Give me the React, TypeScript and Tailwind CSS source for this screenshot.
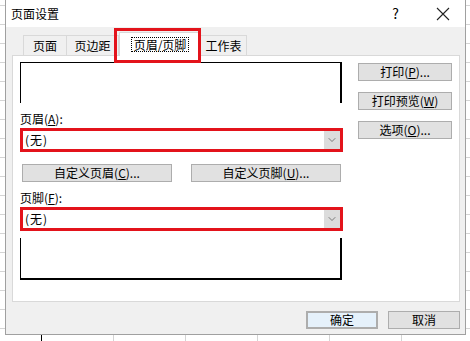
import { ChevronDown } from "lucide-react";

const font = { fontFamily: '"Noto Sans CJK SC", "Noto Sans", sans-serif' };

const Btn = ({ label, className = "" }: { label: React.ReactNode; className?: string }) => (
  <div
    className={`flex items-center justify-center bg-[#e1e1e1] border border-[#adadad] text-[12px] leading-none text-black ${className}`}
  >
    {label}
  </div>
);

const Combo = () => (
  <div className="flex h-[24px] w-[323px] items-stretch border-[3px] border-[#e3131b] bg-white">
    <div className="flex flex-1 items-center pl-[2px] text-[12px] tracking-[1px] text-black">(无)</div>
    <div className="flex w-[16px] items-center justify-center bg-[#dcdcdc]">
      <ChevronDown size={12} strokeWidth={1.3} color="#444" />
    </div>
  </div>
);

const App = () => {
  return (
    <div
      style={font}
      className="relative h-[341px] w-[470px] overflow-hidden bg-white bg-[linear-gradient(to_bottom,#d4d4d4_1px,transparent_1px)] bg-[length:100%_19px] bg-[position:0_5px]"
    >
      {/* spreadsheet column lines below the dialog */}
      <div className="absolute left-0 top-[335px] flex h-[6px] w-full">
        <div className="w-[41px]" />
        <div className="w-[72px] border-l border-dashed border-black" />
        <div className="w-[72px] border-l border-[#d4d4d4]" />
        <div className="w-[72px] border-l border-[#d4d4d4]" />
        <div className="w-[72px] border-l border-[#d4d4d4]" />
        <div className="w-[72px] border-l border-[#d4d4d4]" />
        <div className="w-[69px] border-l border-[#d4d4d4]" />
      </div>

      <div className="absolute left-[5px] top-0 flex h-[335px] w-[461px] flex-col border border-t-0 border-[#a0a0a0] bg-[#f0f0f0]">
        {/* title bar */}
        <div className="flex h-[27px] items-center bg-white pl-[5px] text-[12px] text-black">
          <span className="flex-1">页面设置</span>
          <span className="mr-[37px] text-[14px]">?</span>
          <svg width="14" height="14" viewBox="0 0 14 14" className="mr-[15px]">
            <path d="M1 1L13 13M13 1L1 13" stroke="#222" strokeWidth="1.1" />
          </svg>
        </div>

        {/* tabs */}
        <div className="relative ml-[7px] mt-[4px] flex h-[24px] items-end text-[12px] text-black">
          <div className="ml-[10px] flex h-[20px] w-[44px] items-center justify-center border border-b-0 border-[#d9d9d9]">
            页面
          </div>
          <div className="flex h-[20px] w-[52px] items-center justify-center border border-b-0 border-l-0 border-[#d9d9d9]">
            页边距
          </div>
          <div className="z-10 -mb-px flex h-[24px] w-[82px] items-center justify-center border border-b-0 border-[#d9d9d9] bg-white">
            <span className="border border-dotted border-black px-[2px] leading-[13px]">页眉/页脚</span>
          </div>
          <div className="flex h-[20px] w-[46px] items-center justify-center border border-b-0 border-l-0 border-[#d9d9d9]">
            工作表
          </div>
          <div className="absolute left-[101px] top-[-3px] z-20 h-[35px] w-[87px] border-[3px] border-[#e3131b]" />
        </div>

        {/* tab panel */}
        <div className="ml-[6px] flex h-[247px] w-[448px] border border-[#d9d9d9] bg-white pt-[6px]">
          <div className="ml-[7px] flex w-[323px] flex-col">
            <div className="h-[41px] w-[322px] border-l border-t border-r-2 border-black" />
            <div className="mt-[9px] text-[12px] leading-[14px] text-black">页眉(<u>A</u>):</div>
            <div className="mt-[2px]">
              <Combo />
            </div>
            <div className="mt-[12px] flex gap-[19px] pl-[2px]">
              <Btn className="h-[18px] w-[150px]" label={<span>自定义页眉(<u>C</u>)...</span>} />
              <Btn className="h-[18px] w-[150px]" label={<span>自定义页脚(<u>U</u>)...</span>} />
            </div>
            <div className="mt-[9px] text-[12px] leading-[14px] text-black">页脚(<u>F</u>):</div>
            <div className="mt-[2px]">
              <Combo />
            </div>
            <div className="mt-[7px] h-[42px] w-[322px] border-b-2 border-l border-r-2 border-black" />
          </div>
          <div className="ml-[15px] flex w-[94px] flex-col gap-[11px] pt-[1px]">
            <Btn className="h-[18px]" label={<span>打印(<u>P</u>)...</span>} />
            <Btn className="h-[18px]" label={<span>打印预览(<u>W</u>)</span>} />
            <Btn className="h-[18px]" label={<span>选项(<u>O</u>)...</span>} />
          </div>
        </div>

        {/* footer buttons */}
        <div className="mt-[9px] flex justify-end gap-[10px] pr-[5px]">
          <Btn className="h-[18px] w-[72px] border-2 border-[#0078d7] bg-[#e5f1fb]" label="确定" />
          <Btn className="h-[18px] w-[72px]" label="取消" />
        </div>
      </div>
    </div>
  );
};

export default App;
